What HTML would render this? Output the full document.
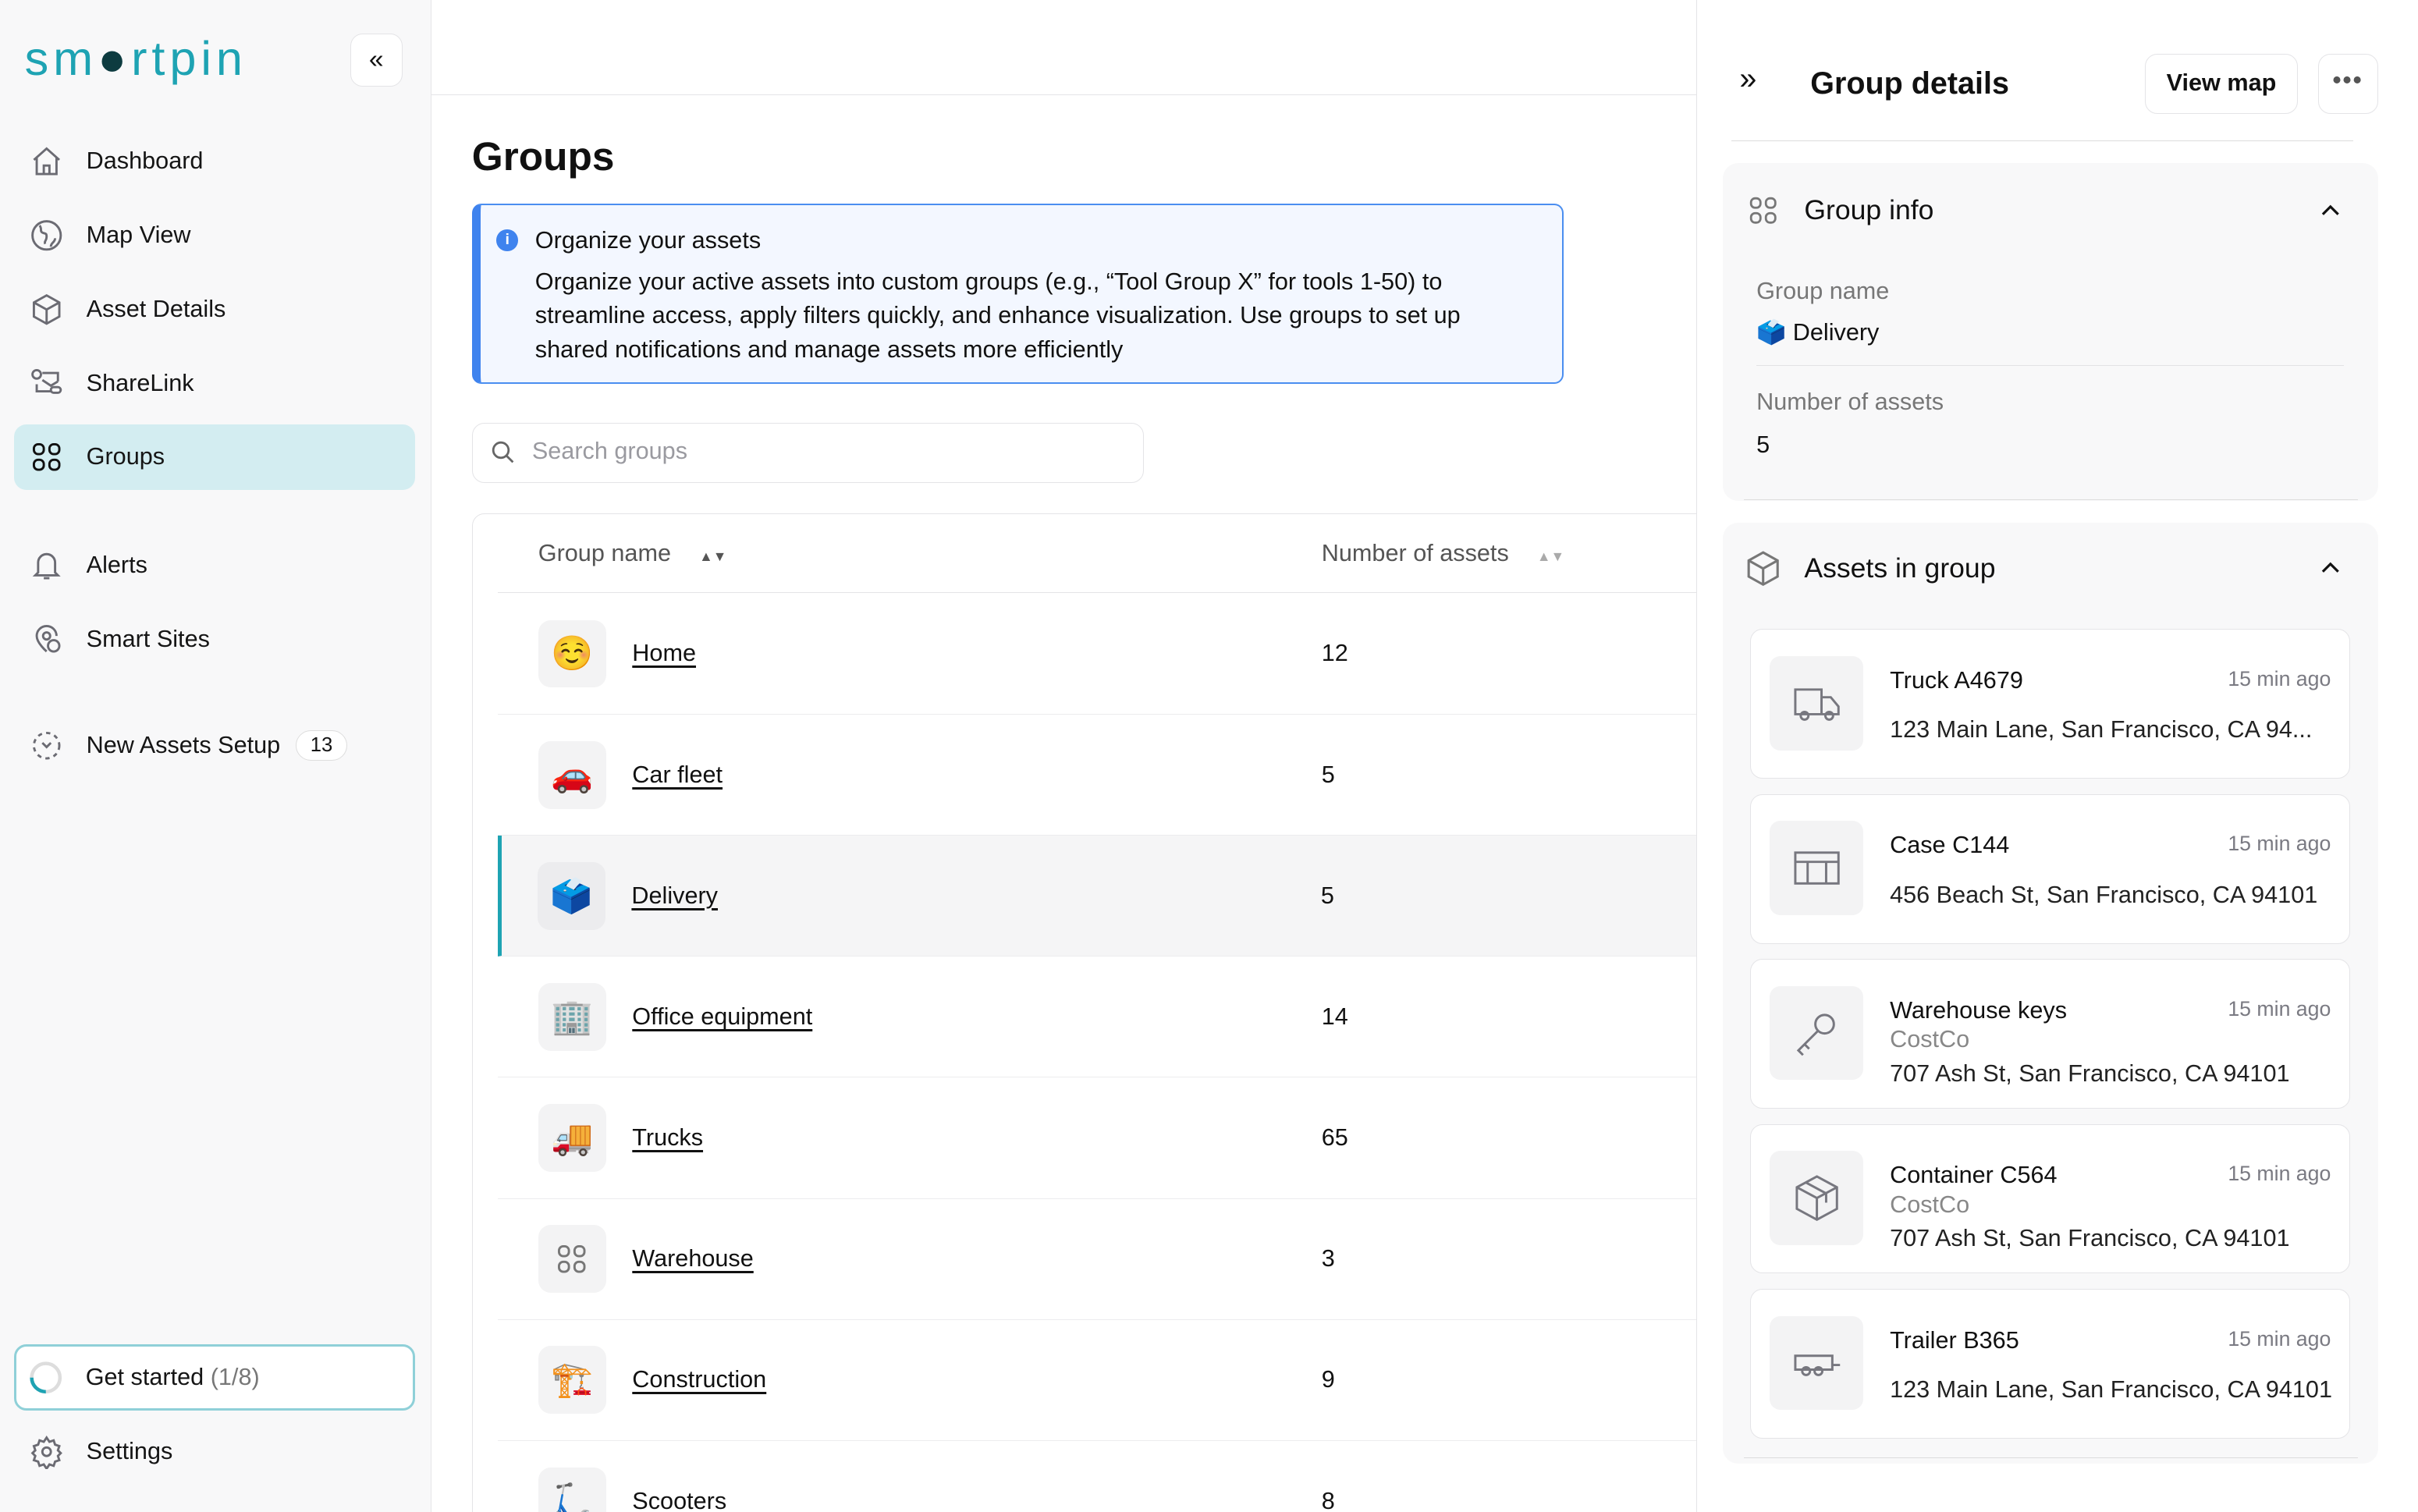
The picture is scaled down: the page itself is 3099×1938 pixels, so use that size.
<!DOCTYPE html>
<html><head><meta charset="utf-8"><style>
*{box-sizing:border-box;margin:0;padding:0}
html,body{width:3099px;height:1938px;overflow:hidden;background:#fff}
#r{zoom:1.9764;width:1568px;height:981px;position:relative;font-family:"Liberation Sans","Noto Sans CJK JP",sans-serif;color:#111;overflow:hidden}
.a{position:absolute}
.side{left:0;top:0;width:280px;height:981px;background:#f8f8f9;border-right:1px solid #e6e6e8}
.nav{left:9px;width:260px;height:43px;display:flex;align-items:center;padding-left:10px;font-size:15.5px;color:#151515}
.nav svg{width:22px;height:22px;margin-right:15px;stroke:#6b6b73;fill:none;stroke-width:1.6}
.card{background:#fff;border:1px solid #e4e4e7;border-radius:8px}
.row{left:323px;width:790px;height:78.5px;border-bottom:1px solid #ececee;display:flex;align-items:center}
.ic{width:44px;height:44px;border-radius:8px;background:#f3f3f4;margin-left:26px;display:flex;align-items:center;justify-content:center;font-size:22px}
.nm{margin-left:17px;font-size:15.5px;text-decoration:underline;text-underline-offset:3px;width:430px}
.num{margin-left:17px;font-size:15.5px}
.asset{left:1135px;width:389px;height:97px;background:#fff;border:1px solid #e4e4e7;border-radius:8px}
.asset .bx{position:absolute;left:12px;top:17px;width:61px;height:61px;background:#f3f3f4;border-radius:7px;display:flex;align-items:center;justify-content:center}
.asset .bx svg{width:34px;height:34px;stroke:#77777f;fill:none;stroke-width:1.5}
.asset .t{position:absolute;left:90px;top:24px;font-size:15.5px}
.asset .tm{position:absolute;right:12px;top:24px;font-size:13.5px;color:#7a7a82}
.asset .s{position:absolute;left:90px;font-size:15.5px;color:#222;white-space:nowrap}
</style></head><body><div id="r">
<div class="a side"></div>
<div class="a" style="left:16px;top:20px;font-size:31px;color:#1ea3b3;letter-spacing:3px">sm<span style="color:#0d3b40">●</span>rtpin</div>
<div class="a card" style="left:227px;top:22px;width:34px;height:34px;display:flex;align-items:center;justify-content:center;font-size:17px">«</div>

<div class="a nav" style="top:83px"><svg viewBox="0 0 24 24"><path d="M3 11l9-8 9 8M5 9v12h14V9M10 21v-6h4v6"/></svg>Dashboard</div>
<div class="a nav" style="top:131px"><svg viewBox="0 0 24 24"><circle cx="12" cy="12" r="10"/><path d="M7 5c2 2 0 4 2 5s3 0 3 3-2 3-1 5M15 20c0-3 3-3 3-6"/></svg>Map View</div>
<div class="a nav" style="top:179px"><svg viewBox="0 0 24 24"><path d="M12 2l9 5v10l-9 5-9-5V7zM3 7l9 5 9-5M12 12v10"/></svg>Asset Details</div>
<div class="a nav" style="top:227px"><svg viewBox="0 0 24 24"><circle cx="5" cy="6" r="3"/><path d="M9 5h11v6M5 13v5h10M9 10l6 4 5-3"/><rect x="15" y="15" width="7" height="4" rx="2"/></svg>ShareLink</div>
<div class="a nav" style="top:275px;background:#d3edf1;border-radius:8px"><svg viewBox="0 0 24 24" style="stroke:#111"><rect x="3" y="3" width="7" height="7" rx="3"/><rect x="14" y="3" width="7" height="7" rx="3"/><rect x="3" y="14" width="7" height="7" rx="3"/><rect x="14" y="14" width="7" height="7" rx="3"/></svg>Groups</div>
<div class="a nav" style="top:345px"><svg viewBox="0 0 24 24"><path d="M6 17V10a6 6 0 0112 0v7l2 2H4zM10 21h4"/></svg>Alerts</div>
<div class="a nav" style="top:393px"><svg viewBox="0 0 24 24"><path d="M12 21s-7-6-7-11a7 7 0 0114 0"/><circle cx="12" cy="10" r="2.5"/><circle cx="17" cy="17" r="4"/></svg>Smart Sites</div>
<div class="a nav" style="top:462px"><svg viewBox="0 0 24 24" stroke-dasharray="3 3"><circle cx="12" cy="12" r="9"/><path d="M9 10l3 3 3-3" stroke-dasharray="none"/></svg>New Assets Setup<span style="margin-left:10px;border:1px solid #ddd;border-radius:11px;padding:2px 9px;font-size:13px;background:#fff">13</span></div>
<div class="a nav" style="top:872px;height:43px;border:2px solid #8fd0d8;border-radius:8px;background:#fff;padding-left:8px"><svg viewBox="0 0 24 24" style="stroke:#ddd;stroke-width:2.5"><circle cx="12" cy="12" r="10"/><path d="M12 22A10 10 0 012 12" style="stroke:#1ea3b3"/></svg>Get started&nbsp;<span style="color:#777">(1/8)</span></div>
<div class="a nav" style="top:920px"><svg viewBox="0 0 24 24"><circle cx="12" cy="12" r="3"/><path d="M12 2l2 3 3-1 1 3 3 1-1 3 2 2-2 2 1 3-3 1-1 3-3-1-2 3-2-3-3 1-1-3-3-1 1-3-2-2 2-2-1-3 3-1 1-3 3 1z"/></svg>Settings</div>

<div class="a" style="left:280px;top:61px;width:821px;border-top:1px solid #e4e4e7"></div>
<div class="a" style="left:306px;top:86px;font-size:26px;font-weight:bold">Groups</div>
<div class="a" style="left:306px;top:132px;width:708px;height:117px;background:#f3f7ff;border:1.5px solid #4a8ef0;border-left:6px solid #3f83ee;border-radius:6px"></div>
<div class="a" style="left:322px;top:149px;width:14px;height:14px;border-radius:50%;background:#3f83ee;color:#fff;font-size:10px;text-align:center;line-height:14px;font-weight:bold">i</div>
<div class="a" style="left:347px;top:147px;font-size:15.5px">Organize your assets</div>
<div class="a" style="left:347px;top:172px;width:640px;font-size:15.5px;line-height:22px">Organize your active assets into custom groups (e.g., “Tool Group X” for tools 1-50) to streamline access, apply filters quickly, and enhance visualization. Use groups to set up shared notifications and manage assets more efficiently</div>
<div class="a card" style="left:306px;top:274px;width:436px;height:39px"></div>
<svg class="a" style="left:318px;top:285px" width="17" height="17" viewBox="0 0 24 24" fill="none" stroke="#666" stroke-width="2"><circle cx="10" cy="10" r="7"/><path d="M15 15l6 6"/></svg>
<div class="a" style="left:345px;top:284px;font-size:15.5px;color:#9a9aa0">Search groups</div>

<div class="a" style="left:306px;top:333px;width:820px;height:680px;border:1px solid #e4e4e7;border-radius:8px"></div>
<div class="a" style="left:349px;top:350px;font-size:15.5px;color:#555">Group name <span style="font-size:9px;margin-left:14px">▲▼</span></div>
<div class="a" style="left:857px;top:350px;font-size:15.5px;color:#555">Number of assets <span style="font-size:9px;margin-left:14px;color:#aaa">▲▼</span></div>
<div class="a" style="left:323px;top:384px;width:790px;border-top:1px solid #e4e4e7"></div>
<div class="a row" style="top:385px"><div class="ic">☺️</div><div class="nm">Home</div><div class="num">12</div></div>
<div class="a row" style="top:463.5px"><div class="ic">🚗</div><div class="nm">Car fleet</div><div class="num">5</div></div>
<div class="a row" style="top:542px;background:#f5f5f6;border-left:3px solid #1ea3b3"><div class="ic" style="margin-left:23px;background:#ececee">🗳️</div><div class="nm">Delivery</div><div class="num">5</div></div>
<div class="a row" style="top:620.5px"><div class="ic">🏢</div><div class="nm">Office equipment</div><div class="num">14</div></div>
<div class="a row" style="top:699px"><div class="ic">🚚</div><div class="nm">Trucks</div><div class="num">65</div></div>
<div class="a row" style="top:777.5px"><div class="ic"><svg width="22" height="22" viewBox="0 0 24 24" fill="none" stroke="#777" stroke-width="1.6"><rect x="3" y="3" width="7" height="7" rx="3"/><rect x="14" y="3" width="7" height="7" rx="3"/><rect x="3" y="14" width="7" height="7" rx="3"/><rect x="14" y="14" width="7" height="7" rx="3"/></svg></div><div class="nm">Warehouse</div><div class="num">3</div></div>
<div class="a row" style="top:856px"><div class="ic">🏗️</div><div class="nm">Construction</div><div class="num">9</div></div>
<div class="a row" style="top:934.5px"><div class="ic">🛴</div><div class="nm">Scooters</div><div class="num">8</div></div>

<div class="a" style="left:1100px;top:0;width:470px;height:981px;background:#fff;border-left:1px solid #e4e4e7"></div>
<div class="a" style="left:1128px;top:40px;font-size:20px">»</div>
<div class="a" style="left:1174px;top:43px;font-size:20px;font-weight:bold">Group details</div>
<div class="a card" style="left:1391px;top:35px;width:99px;height:39px;font-size:15.5px;font-weight:bold;text-align:center;line-height:37px">View map</div>
<div class="a card" style="left:1503px;top:35px;width:39px;height:39px;text-align:center;line-height:33px;font-weight:bold;color:#555;letter-spacing:1px">•••</div>
<div class="a" style="left:1123px;top:91px;width:403px;border-top:1px solid #ddd"></div>
<div class="a" style="left:1117px;top:106px;width:425px;height:219px;background:#f8f8f9;border-radius:10px"></div>
<svg class="a" style="left:1133px;top:126px" width="21" height="21" viewBox="0 0 24 24" fill="none" stroke="#777" stroke-width="1.6"><rect x="3" y="3" width="7" height="7" rx="3"/><rect x="14" y="3" width="7" height="7" rx="3"/><rect x="3" y="14" width="7" height="7" rx="3"/><rect x="14" y="14" width="7" height="7" rx="3"/></svg>
<div class="a" style="left:1170px;top:126px;font-size:18px">Group info</div>
<svg class="a" style="left:1503px;top:129px" width="16" height="16" viewBox="0 0 16 16" fill="none" stroke="#111" stroke-width="1.6"><path d="M3 10l5-5 5 5"/></svg>
<div class="a" style="left:1139px;top:180px;font-size:15.5px;color:#777">Group name</div>
<div class="a" style="left:1139px;top:207px;font-size:15.5px">🗳️ Delivery</div>
<div class="a" style="left:1139px;top:237px;width:381px;border-top:1px solid #e2e2e4"></div>
<div class="a" style="left:1139px;top:252px;font-size:15.5px;color:#777">Number of assets</div>
<div class="a" style="left:1139px;top:280px;font-size:15.5px">5</div>
<div class="a" style="left:1131px;top:324px;width:398px;border-top:1px solid #ddd"></div>
<div class="a" style="left:1117px;top:339px;width:425px;height:610px;background:#f8f8f9;border-radius:10px"></div>
<svg class="a" style="left:1131px;top:356px" width="25" height="25" viewBox="0 0 24 24" fill="none" stroke="#777" stroke-width="1.5"><path d="M12 2l9 5v10l-9 5-9-5V7zM3 7l9 5 9-5M12 12v10"/></svg>
<div class="a" style="left:1170px;top:358px;font-size:18px">Assets in group</div>
<svg class="a" style="left:1503px;top:361px" width="16" height="16" viewBox="0 0 16 16" fill="none" stroke="#111" stroke-width="1.6"><path d="M3 10l5-5 5 5"/></svg>
<div class="a" style="left:1131px;top:945px;width:398px;border-top:1px solid #ddd"></div>

<div class="a asset" style="top:408px"><div class="bx"><svg viewBox="0 0 34 34"><path d="M3 8h17v16H3zM20 13h6l5 6v5H20"/><circle cx="9" cy="25" r="2.5"/><circle cx="25" cy="25" r="2.5"/></svg></div><div class="t">Truck A4679</div><div class="tm">15 min ago</div><div class="s" style="top:56px">123 Main Lane, San Francisco, CA 94...</div></div>
<div class="a asset" style="top:515px"><div class="bx"><svg viewBox="0 0 34 34"><rect x="3" y="7" width="28" height="20"/><path d="M3 13h28M11 13v14M23 13v14"/></svg></div><div class="t">Case C144</div><div class="tm">15 min ago</div><div class="s" style="top:56px">456 Beach St, San Francisco, CA 94101</div></div>
<div class="a asset" style="top:622px"><div class="bx"><svg viewBox="0 0 34 34"><circle cx="22" cy="11" r="6"/><path d="M18 15L5 28l3 3M9 24l3 3"/></svg></div><div class="t">Warehouse keys</div><div class="tm">15 min ago</div><div class="s" style="top:43px;color:#888">CostCo</div><div class="s" style="top:65px">707 Ash St, San Francisco, CA 94101</div></div>
<div class="a asset" style="top:729px"><div class="bx"><svg viewBox="0 0 34 34"><path d="M17 3l13 7v14l-13 7-13-7V10zM4 10l13 7 13-7M17 17v14M10 7l13 7v6"/></svg></div><div class="t">Container C564</div><div class="tm">15 min ago</div><div class="s" style="top:43px;color:#888">CostCo</div><div class="s" style="top:65px">707 Ash St, San Francisco, CA 94101</div></div>
<div class="a asset" style="top:836px"><div class="bx"><svg viewBox="0 0 34 34"><path d="M3 12h24v9H3zM27 18h5"/><circle cx="10" cy="22" r="2.5"/><circle cx="18" cy="22" r="2.5"/></svg></div><div class="t">Trailer B365</div><div class="tm">15 min ago</div><div class="s" style="top:56px">123 Main Lane, San Francisco, CA 94101</div></div>
</div></body></html>
